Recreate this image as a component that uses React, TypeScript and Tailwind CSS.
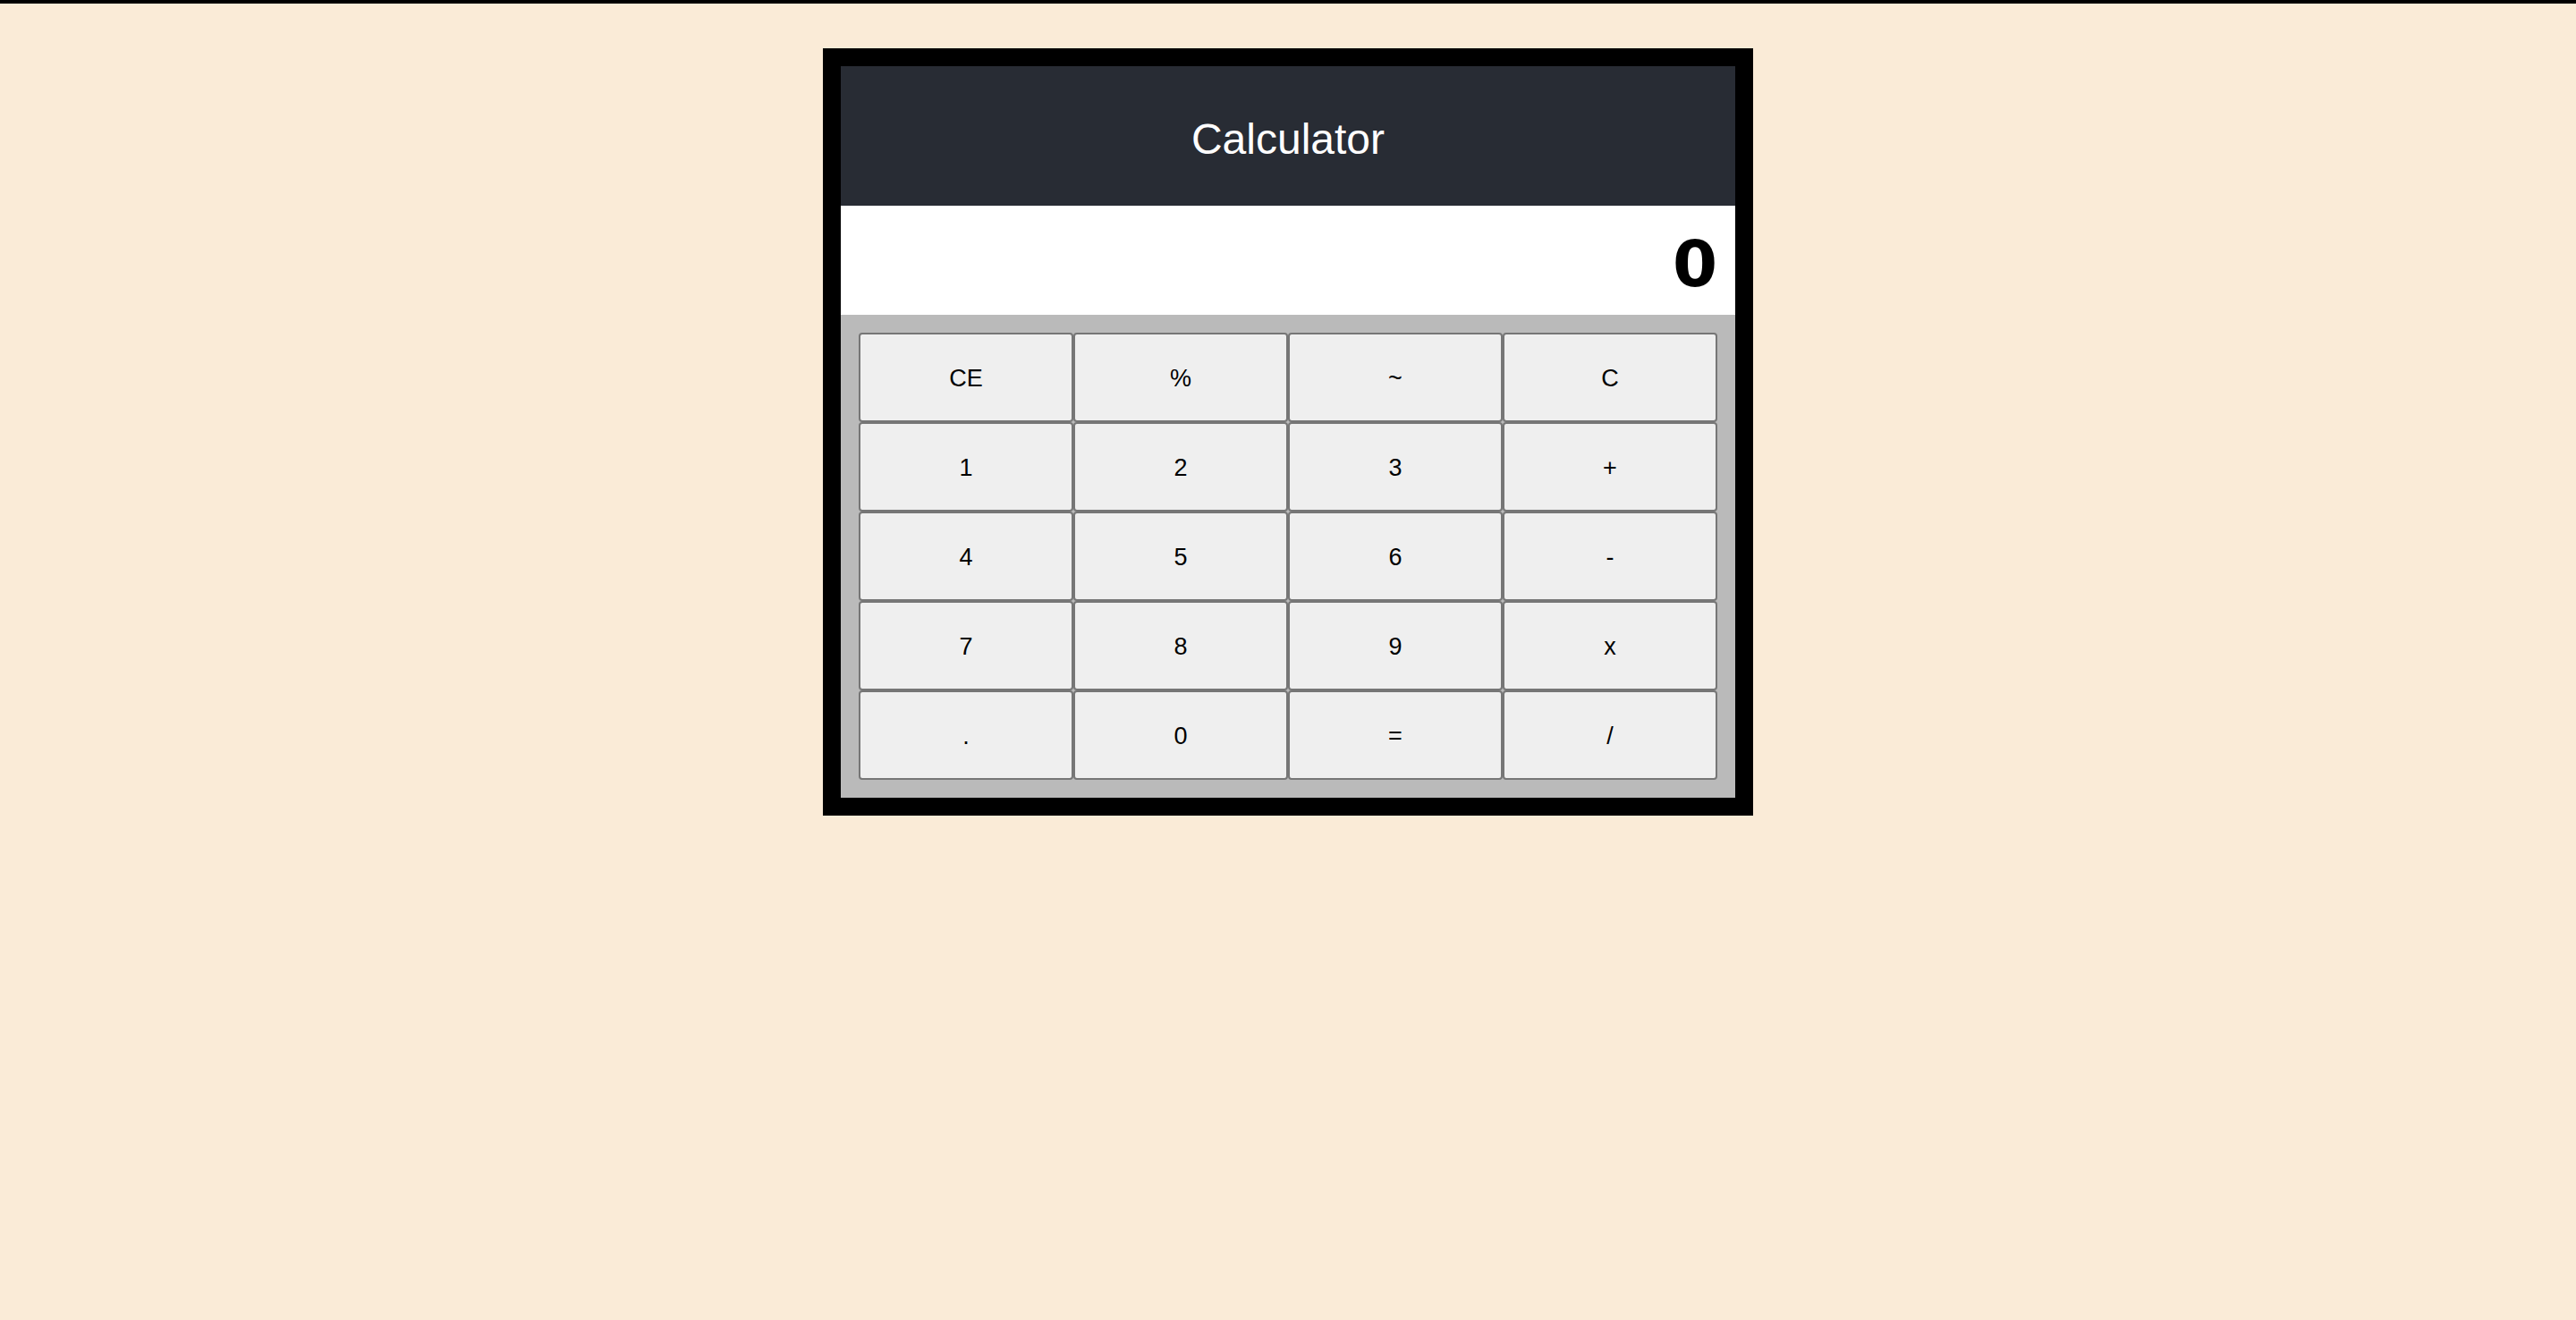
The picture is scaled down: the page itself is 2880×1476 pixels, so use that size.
import React from "react";

const keys = [
  "CE", "%", "~", "C",
  "1", "2", "3", "+",
  "4", "5", "6", "-",
  "7", "8", "9", "x",
  ".", "0", "=", "/",
];

export default function App() {
  return (
    <div className="min-h-screen bg-[#faebd7] font-['Liberation_Sans',Arial,sans-serif]">
      {/* top rule */}
      <div className="h-[4px] bg-black" />

      <div className="mt-[50px] mx-auto w-[1040px] border-[20px] border-black">
        {/* Header */}
        <header className="h-[156px] bg-[#282c34] flex items-center justify-center pt-[8px]">
          <h1 className="text-[48px] text-white">Calculator</h1>
        </header>

        {/* Display */}
        <div className="h-[122px] bg-white flex items-center justify-end pr-[20px] pt-[8px]">
          <span className="text-[72px] font-bold leading-none text-black font-['DejaVu_Sans',sans-serif]">0</span>
        </div>

        {/* Keypad */}
        <div className="bg-[#bababa] p-[20px] grid grid-cols-4">
          {keys.map((k) => (
            <button
              key={k}
              className="h-[100px] pt-[3px] bg-[#efefef] border-2 border-[#767676] rounded-[4px] text-[27px] text-black"
            >
              {k}
            </button>
          ))}
        </div>
      </div>
    </div>
  );
}
